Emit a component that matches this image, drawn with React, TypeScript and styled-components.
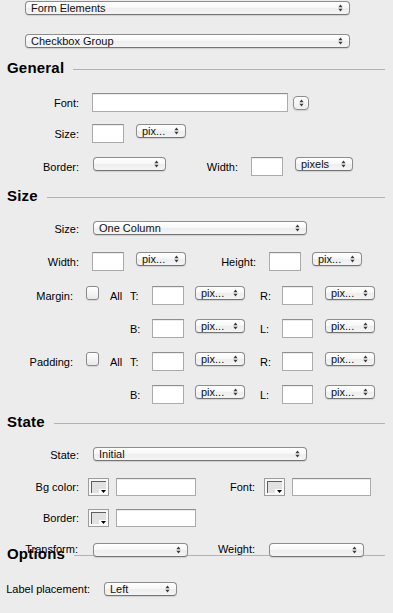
import React from 'react';
import styled, { createGlobalStyle } from 'styled-components';

const Global = createGlobalStyle`
  html, body { margin: 0; padding: 0; background: #ececec; }
  body { font-family: "Liberation Sans", Arial, Helvetica, sans-serif; font-size: 11px; color: #000; }
`;

const Page = styled.div`
  width: 393px;
  height: 613px;
  overflow: hidden;
  box-sizing: border-box;
  padding-top: 1px;
  background: #ececec;
  display: flex;
  flex-direction: column;
`;

const Row = styled.div<{ $mt: number; $h: number; $front?: boolean }>`
  display: flex;
  align-items: flex-start;
  flex-shrink: 0;
  height: ${(p) => p.$h}px;
  margin-top: ${(p) => p.$mt}px;
  ${(p) => (p.$front ? 'position: relative; z-index: 1;' : '')}
`;

const Label = styled.span<{ $w?: number; $ml?: number; $dy?: number }>`
  flex-shrink: 0;
  align-self: center;
  width: ${(p) => (p.$w ? `${p.$w}px` : 'auto')};
  margin-left: ${(p) => p.$ml ?? 0}px;
  margin-top: ${(p) => p.$dy ?? 0}px;
  text-align: right;
  font-size: 11px;
  line-height: 14px;
  white-space: nowrap;
  color: #000;
`;

const HeadingRow = styled.div<{ $mt: number }>`
  display: flex;
  align-items: flex-start;
  flex-shrink: 0;
  height: 16px;
  margin-top: ${(p) => p.$mt}px;
  padding-left: 7px;
`;

const HeadingTitle = styled.span`
  font-family: "Liberation Sans", Arial, Helvetica, sans-serif;
  font-weight: bold;
  font-size: 15px;
  line-height: 16px;
  letter-spacing: 0.2px;
  color: #000;
  white-space: nowrap;
`;

const Rule = styled.div`
  flex: 1;
  height: 1px;
  margin: 9px 8px 0 9px;
  background: #b3b3b3;
`;

const SelectBox = styled.div<{ $w: number; $ml?: number }>`
  box-sizing: border-box;
  flex-shrink: 0;
  width: ${(p) => p.$w}px;
  height: 14px;
  margin-left: ${(p) => p.$ml ?? 0}px;
  display: flex;
  align-items: center;
  padding: 0 6px 0 5px;
  border: 1px solid #8d8d8d;
  border-bottom-color: #747474;
  border-radius: 4px;
  background: linear-gradient(#ffffff, #f8f8f8 45%, #eeeeee 55%, #f5f5f5);
  box-shadow: 0 1px 1px rgba(0, 0, 0, 0.12);
  font-size: 11px;
  line-height: 12px;
  color: #111;
  white-space: nowrap;
  overflow: hidden;
`;

const SelectText = styled.span`
  flex: 1;
  overflow: hidden;
`;

const ArrowSvg = styled.svg`
  flex-shrink: 0;
  display: block;
`;

const Arrows = () => (
  <ArrowSvg width="5" height="8" viewBox="0 0 5 8">
    <polygon points="0.4,3.2 2.5,0.6 4.6,3.2" fill="#3a3a3a" />
    <polygon points="0.4,4.8 2.5,7.4 4.6,4.8" fill="#3a3a3a" />
  </ArrowSvg>
);

const Select = ({ w, ml, children }: { w: number; ml?: number; children?: React.ReactNode }) => (
  <SelectBox $w={w} $ml={ml}>
    <SelectText>{children}</SelectText>
    <Arrows />
  </SelectBox>
);

const Stepper = styled.div<{ $ml?: number }>`
  box-sizing: border-box;
  flex-shrink: 0;
  align-self: center;
  width: 16px;
  height: 14px;
  margin-left: ${(p) => p.$ml ?? 0}px;
  display: flex;
  align-items: center;
  justify-content: center;
  border: 1px solid #8d8d8d;
  border-radius: 4px;
  background: linear-gradient(#ffffff, #f6f6f6 50%, #ececec);
  box-shadow: 0 1px 1px rgba(0, 0, 0, 0.12);
`;

const TextField = styled.div<{ $w: number; $h?: number; $ml?: number }>`
  box-sizing: border-box;
  flex-shrink: 0;
  width: ${(p) => p.$w}px;
  height: ${(p) => p.$h ?? 19}px;
  margin-left: ${(p) => p.$ml ?? 0}px;
  background: #ffffff;
  border: 1px solid #ababab;
  border-top-color: #8f8f8f;
  box-shadow: inset 0 1px 0 #ececec;
`;

const Checkbox = styled.div`
  box-sizing: border-box;
  width: 13px;
  height: 14px;
  border: 1px solid #8a8a8a;
  border-radius: 3px;
  background: linear-gradient(#ffffff, #f4f4f4 50%, #e9e9e9);
  box-shadow: 0 1px 1px rgba(0, 0, 0, 0.1);
`;

const WellFrame = styled.div<{ $ml?: number }>`
  position: relative;
  box-sizing: border-box;
  flex-shrink: 0;
  width: 21px;
  height: 18px;
  margin-left: ${(p) => p.$ml ?? 0}px;
  padding: 2px;
  display: flex;
  border: 1px solid #9d9d9d;
  background: #f7f7f7;
`;

const WellSwatch = styled.div`
  flex: 1;
  border-top: 1px solid #5e5e5e;
  border-left: 1px solid #5e5e5e;
  background: #e1e1e1;
`;

const WellTab = styled.div`
  position: absolute;
  right: 1px;
  bottom: 1px;
  width: 8px;
  height: 5px;
  background: #ffffff;
  display: flex;
  align-items: center;
  justify-content: center;
`;

const ColorWell = ({ ml }: { ml?: number }) => (
  <WellFrame $ml={ml}>
    <WellSwatch />
    <WellTab>
      <svg width="5" height="3" viewBox="0 0 5 3">
        <polygon points="0,0 5,0 2.5,3" fill="#000" />
      </svg>
    </WellTab>
  </WellFrame>
);

const BoxGrid = styled.div`
  display: grid;
  grid-template-columns: 86px 24px 20px 22px 43px 65px 22px 43px 51px;
  grid-auto-rows: 19px;
  row-gap: 14px;
  margin-top: 15px;
  align-items: start;
  flex-shrink: 0;
`;

const GridText = styled.span<{ $right?: boolean; $col?: number }>`
  align-self: center;
  font-size: 11px;
  line-height: 14px;
  white-space: nowrap;
  text-align: ${(p) => (p.$right ? 'right' : 'left')};
  padding-right: ${(p) => (p.$right ? 13 : 0)}px;
  ${(p) => (p.$col ? `grid-column-start: ${p.$col};` : '')}
`;

const SideRow = ({ label, first }: { label: string; first: boolean }) => (
  <>
    {first ? (
      <>
        <GridText $right>{label}</GridText>
        <Checkbox />
        <GridText>All</GridText>
        <GridText>T:</GridText>
      </>
    ) : (
      <GridText $col={4}>B:</GridText>
    )}
    <TextField $w={32} />
    <Select w={50}>pix...</Select>
    <GridText>{first ? 'R:' : 'L:'}</GridText>
    <TextField $w={31} />
    <Select w={50}>pix...</Select>
  </>
);

export default function App() {
  return (
    <Page>
      <Global />
      <Row $mt={0} $h={14}>
        <Select w={325} ml={25}>Form Elements</Select>
      </Row>
      <Row $mt={19} $h={14}>
        <Select w={325} ml={25}>Checkbox Group</Select>
      </Row>

      <HeadingRow $mt={12}>
        <HeadingTitle>General</HeadingTitle>
        <Rule />
      </HeadingRow>

      <Row $mt={17} $h={19}>
        <Label $w={79}>Font:</Label>
        <TextField $w={196} $ml={13} />
        <Stepper $ml={5}>
          <Arrows />
        </Stepper>
      </Row>
      <Row $mt={12} $h={19}>
        <Label $w={79}>Size:</Label>
        <TextField $w={32} $ml={13} />
        <Select w={50} ml={12}>pix...</Select>
      </Row>
      <Row $mt={14} $h={19}>
        <Label $w={79}>Border:</Label>
        <Select w={73} ml={14} />
        <Label $w={72}>Width:</Label>
        <TextField $w={32} $ml={13} />
        <Select w={58} ml={12}>pixels</Select>
      </Row>

      <HeadingRow $mt={12}>
        <HeadingTitle>Size</HeadingTitle>
        <Rule />
      </HeadingRow>

      <Row $mt={17} $h={15}>
        <Label $w={79}>Size:</Label>
        <Select w={214} ml={14}>One Column</Select>
      </Row>
      <Row $mt={16} $h={19}>
        <Label $w={79}>Width:</Label>
        <TextField $w={32} $ml={13} />
        <Select w={50} ml={12}>pix...</Select>
        <Label $w={70}>Height:</Label>
        <TextField $w={32} $ml={13} />
        <Select w={50} ml={11}>pix...</Select>
      </Row>

      <BoxGrid>
        <SideRow label="Margin:" first />
        <SideRow label="" first={false} />
        <SideRow label="Padding:" first />
        <SideRow label="" first={false} />
      </BoxGrid>

      <HeadingRow $mt={10}>
        <HeadingTitle>State</HeadingTitle>
        <Rule />
      </HeadingRow>

      <Row $mt={17} $h={15}>
        <Label $w={79}>State:</Label>
        <Select w={214} ml={14}>Initial</Select>
      </Row>
      <Row $mt={16} $h={18}>
        <Label $w={79}>Bg color:</Label>
        <ColorWell ml={9} />
        <TextField $w={80} $h={18} $ml={7} />
        <Label $w={59}>Font:</Label>
        <ColorWell ml={9} />
        <TextField $w={79} $h={18} $ml={7} />
      </Row>
      <Row $mt={13} $h={18}>
        <Label $w={79}>Border:</Label>
        <ColorWell ml={9} />
        <TextField $w={80} $h={18} $ml={7} />
      </Row>
      <Row $mt={16} $h={14} $front>
        <Label $w={78} $dy={-2}>Transform:</Label>
        <Select w={95} ml={15} />
        <Label $w={67} $dy={-2}>Weight:</Label>
        <Select w={95} ml={14} />
      </Row>

      <HeadingRow $mt={-11}>
        <HeadingTitle>Options</HeadingTitle>
        <Rule />
      </HeadingRow>

      <Row $mt={20} $h={14}>
        <Label $w={90}>Label placement:</Label>
        <Select w={73} ml={14}>Left</Select>
      </Row>
    </Page>
  );
}
